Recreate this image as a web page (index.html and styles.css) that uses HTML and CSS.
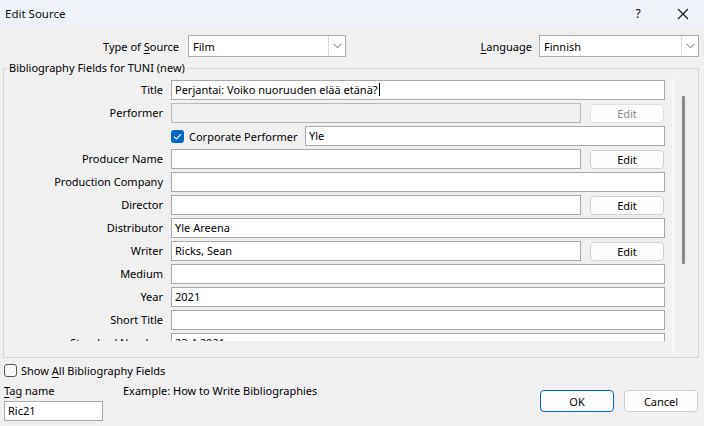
FILE: index.html
```html
<!DOCTYPE html>
<html>
<head>
<meta charset="utf-8">
<link rel="stylesheet" href="styles.css">
</head>
<body>
<div class="dialog">
  <div class="titlebar">
    <span class="title">Edit Source</span>
    <div class="tb-buttons">
      <span class="tb-help">?</span>
      <svg class="tb-close" width="12" height="12" viewBox="0 0 12 12"><path d="M1 1L11 11M11 1L1 11" stroke="#1a1a1a" stroke-width="1.1" fill="none"/></svg>
    </div>
  </div>
  <div class="top">
    <div class="top-left">
      <span class="lbl lbl-type">Type of <u>S</u>ource</span>
      <div class="select w-type"><span class="sel-text">Film</span><span class="sel-btn"><svg width="9" height="6" viewBox="0 0 9 6"><path d="M0.5 0.8L4.5 4.8L8.5 0.8" stroke="#6a6a6a" stroke-width="1" fill="none"/></svg></span></div>
    </div>
    <div class="top-right">
      <span class="lbl"><u>L</u>anguage</span>
      <div class="select w-lang"><span class="sel-text">Finnish</span><span class="sel-btn"><svg width="9" height="6" viewBox="0 0 9 6"><path d="M0.5 0.8L4.5 4.8L8.5 0.8" stroke="#6a6a6a" stroke-width="1" fill="none"/></svg></span></div>
    </div>
  </div>
  <fieldset class="group">
    <legend>Bibliography Fields for TUNI (new)</legend>
    <div class="group-inner">
      <div class="scroll">
        <div class="clip">
          <div class="rows">
            <span class="rl">Title</span>
            <div class="field"><div class="input full">Perjantai: Voiko nuoruuden elää etänä?<span class="caret"></span></div></div>

            <span class="rl">Performer</span>
            <div class="field"><div class="input short disabled"></div><span class="btn edit disabled-btn">Edit</span></div>

            <span class="rl"></span>
            <div class="field corp">
              <span class="chk on"><svg width="9" height="7" viewBox="0 0 9 7"><path d="M1 3.6L3.4 6L8 1.2" stroke="#fff" stroke-width="1.2" fill="none"/></svg></span>
              <span class="corp-lbl">Corporate Performer</span>
              <div class="input corp-input">Yle</div>
            </div>

            <span class="rl">Producer Name</span>
            <div class="field"><div class="input short"></div><span class="btn edit">Edit</span></div>

            <span class="rl">Production Company</span>
            <div class="field"><div class="input full"></div></div>

            <span class="rl">Director</span>
            <div class="field"><div class="input short"></div><span class="btn edit">Edit</span></div>

            <span class="rl">Distributor</span>
            <div class="field"><div class="input full">Yle Areena</div></div>

            <span class="rl">Writer</span>
            <div class="field"><div class="input short">Ricks, Sean</div><span class="btn edit">Edit</span></div>

            <span class="rl">Medium</span>
            <div class="field"><div class="input full"></div></div>

            <span class="rl">Year</span>
            <div class="field"><div class="input full">2021</div></div>

            <span class="rl">Short Title</span>
            <div class="field"><div class="input full"></div></div>

            <span class="rl">Standard Number</span>
            <div class="field"><div class="input full">23.4.2021</div></div>
          </div>
        </div>
      </div>
      <div class="vscroll"><div class="thumb"></div></div>
    </div>
  </fieldset>
  <div class="bottom">
    <div class="bottom-left">
      <div class="showall"><span class="chk off"></span><span>Show <u>A</u>ll Bibliography Fields</span></div>
      <div class="tagline"><span class="tag-lbl"><u>T</u>ag name</span><span class="example">Example: How to Write Bibliographies</span></div>
      <div class="input tag-input">Ric21</div>
    </div>
    <div class="bottom-right">
      <span class="btn ok">OK</span>
      <span class="btn cancel">Cancel</span>
    </div>
  </div>
</div>
</body>
</html>
```
FILE: styles.css
```css
* { box-sizing: border-box; }
html, body { margin: 0; padding: 0; }
body {
  width: 704px;
  height: 426px;
  overflow: hidden;
  background: #f0f0f0;
  font-family: "Noto Sans", "Open Sans", sans-serif;
  font-size: 11px;
  color: #000;
}
u { text-decoration: underline; text-underline-offset: 2px; }
.dialog { width: 704px; height: 426px; display: flex; flex-direction: column; }
.titlebar {
  height: 27px;
  background: #eef2f8;
  display: flex;
  align-items: center;
  justify-content: space-between;
  padding-left: 5px;
  flex: none;
}
.title { font-size: 11.5px; color: #111; margin-top: -1px; }
.tb-buttons { display: flex; align-items: center; }
.tb-help { width: 46px; text-align: center; font-size: 12px; margin-right: -3px; }
.tb-close { margin: 0 15px 0 19px; }

.top {
  display: flex;
  justify-content: space-between;
  align-items: center;
  height: 22px;
  margin-top: 8px;
  padding: 0 5px 0 0;
  flex: none;
}
.top-left, .top-right { display: flex; align-items: center; }
.lbl { margin-right: 7px; }
.lbl-type { width: 179px; text-align: right; margin-right: 9px; }
.select {
  height: 22px;
  background: #fff;
  border: 1px solid #acacac;
  display: flex;
  align-items: center;
  justify-content: space-between;
}
.w-type { width: 158px; }
.w-lang { width: 160px; }
.sel-text { padding-left: 4px; }
.sel-btn {
  width: 17px;
  height: 20px;
  border-left: 1px solid #dadada;
  display: flex;
  align-items: center;
  justify-content: center;
}

.group {
  margin: 5px 5px 0 3px;
  padding: 0;
  border: 1px solid #d5d5d5;
  height: 296px;
  flex: none;
  min-width: 0;
}
.group legend {
  margin-left: 3px;
  padding: 0 2px;
  line-height: 12px;
}
.group-inner {
  display: flex;
  height: 283px;
  margin-top: 4px;
}
.scroll {
  width: 670px;
  height: 276px;
  border-right: 1px solid #ffffff;
  flex: none;
}
.clip { height: 263px; overflow: hidden; }
.rows {
  display: grid;
  grid-template-columns: 159px 494px;
  grid-auto-rows: 20px;
  column-gap: 8px;
  row-gap: 3px;
  padding-top: 2px;
}
.rl {
  text-align: right;
  line-height: 20px;
  white-space: nowrap;
}
.field { display: flex; align-items: center; gap: 9px; }
.input {
  height: 20px;
  background: #fff;
  border: 1px solid #a9a9a9;
  padding-left: 3px;
  line-height: 18px;
  white-space: nowrap;
  overflow: hidden;
}
.input.full { width: 494px; }
.input.short { width: 410px; }
.input.disabled { background: #f0f0f0; border-color: #b8b8b8; }
.caret { display: inline-block; width: 1px; height: 13px; background: #000; vertical-align: -2px; margin-left: 1px; }
.btn {
  display: inline-flex;
  align-items: center;
  justify-content: center;
  background: #fdfdfd;
  border: 1px solid #d0d0d0;
  border-radius: 4px;
}
.edit { width: 74px; height: 19px; }
.disabled-btn { color: #8b8b8b; border-color: #e0e0e0; }
.corp { gap: 0; }
.chk {
  width: 13px;
  height: 13px;
  border-radius: 3px;
  display: inline-flex;
  align-items: center;
  justify-content: center;
  flex: none;
}
.chk.on { background: #0067c0; }
.chk.off { border: 1px solid #5a5a5a; background: #f8f8f8; }
.corp-lbl { margin-left: 5px; width: 116px; }
.corp-input { width: 360px; }
.vscroll { width: 24px; position: relative; }
.thumb {
  position: absolute;
  left: 8px;
  top: 18px;
  width: 3px;
  height: 168px;
  background: #8a8a8a;
  border-radius: 1px;
}

.bottom {
  display: flex;
  justify-content: space-between;
  padding: 5px 6px 0 4px;
}
.bottom-left { display: flex; flex-direction: column; }
.showall { display: flex; align-items: center; gap: 4px; height: 15px; }
.tagline { display: flex; margin-top: 4px; height: 16px; align-items: center; }
.tag-lbl { width: 119px; }
.tag-input { width: 99px; margin-top: 3px; }
.bottom-right { display: flex; gap: 10px; align-items: flex-end; padding-bottom: 9px; }
.ok, .cancel { width: 74px; height: 22px; }
.ok { border: 1px solid #0067c0; }
.cancel { border-color: #cfcfcf; }
```
